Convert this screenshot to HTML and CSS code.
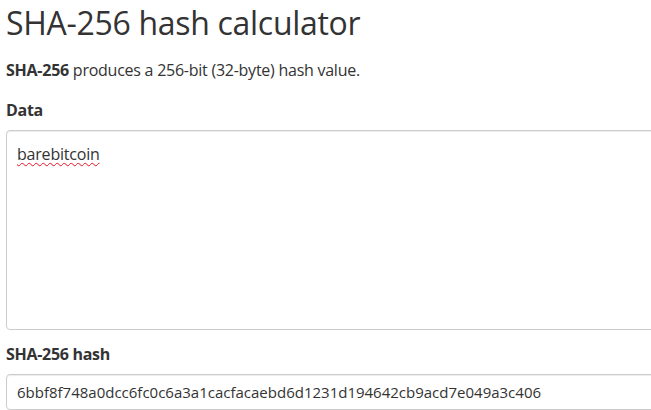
FILE: index.html
```html
<!DOCTYPE html>
<html lang="en">

<head>
    <meta charset="UTF-8">
    <meta name="viewport" content="width=device-width, initial-scale=1.0">
    <title>SHA-256 hash calculator</title>
    <link rel="stylesheet" href="styles.css">
</head>

<body>
    <div class="container">
        <h1>SHA-256 hash calculator</h1>
        <p class="intro"><strong>SHA-256</strong> produces a 256-bit (32-byte) hash value.</p>

        <div class="form-group">
            <label for="data">Data</label>
            <div id="data" class="form-control data-input" contenteditable="true" role="textbox"
                aria-multiline="true"><span class="misspelled">barebitcoin</span></div>
        </div>

        <div class="form-group">
            <label for="hash">SHA-256 hash</label>
            <input id="hash" class="form-control hash-output" type="text" readonly
                value="6bbf8f748a0dcc6fc0c6a3a1cacfacaebd6d1231d194642cb9acd7e049a3c406">
        </div>
    </div>
</body>

</html>
```

FILE: styles.css
```css
html,
body {
    overflow: hidden;
}

body {
    font-family: "Open Sans", "Noto Sans", Arial, sans-serif;
    font-size: 16px;
    line-height: 1.5;
    color: #333;
    margin: 0;
    background: #fff;
}

.container {
    width: 720px;
    padding: 0 6px;
}

h1 {
    font-size: 32px;
    font-weight: 400;
    line-height: 1.2;
    margin: 4px 0 16px;
    letter-spacing: -0.3px;
}

.intro {
    margin: 0 0 16px;
    letter-spacing: -0.25px;
}

.form-group {
    margin-bottom: 12px;
}

label {
    display: block;
    font-weight: 700;
    margin-bottom: 8px;
    letter-spacing: -0.3px;
}

.form-control {
    display: block;
    box-sizing: border-box;
    width: 100%;
    height: 36px;
    padding: 6px 10px;
    font-family: inherit;
    font-size: 16px;
    line-height: 1.5;
    color: #333;
    background: #fff;
    border: 1px solid #ccc;
    border-radius: 4px;
    box-shadow: inset 0 1px 1px rgba(0, 0, 0, .075);
    outline: none;
}

.data-input {
    height: 200px;
    padding: 11px 10px;
    letter-spacing: -0.2px;
}

.misspelled {
    text-decoration: underline wavy #e81123;
    text-decoration-thickness: 1px;
    text-underline-offset: 2px;
}

.hash-output {
    font-size: 15px;
}
```
